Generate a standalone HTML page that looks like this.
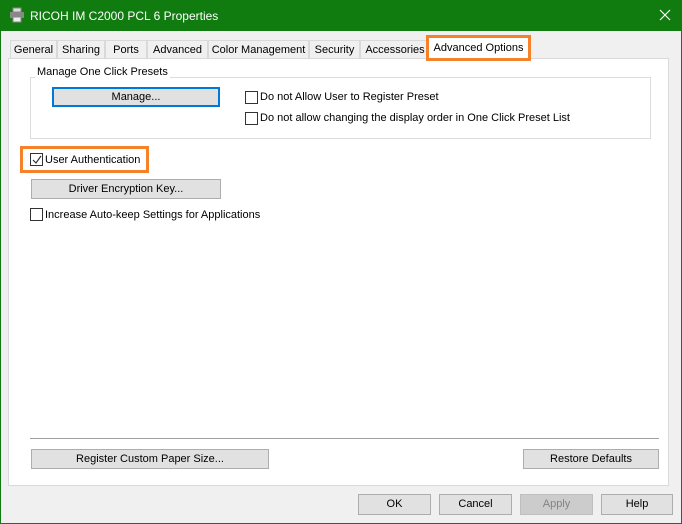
<!DOCTYPE html>
<html><head><meta charset="utf-8"><style>
*{box-sizing:border-box;margin:0;padding:0}
body{width:682px;height:524px;overflow:hidden;background:#f0f0f0;font-family:"Liberation Sans",sans-serif;font-size:11px;color:#000;position:relative;white-space:nowrap}
.a{position:absolute}
.win{left:0;top:0;width:682px;height:524px;border:1px solid #107c10;border-top:none}
.title{left:0;top:0;width:682px;height:31px;background:#107c10;color:#fff;font-size:12px}
.tab{top:40px;height:19px;border:1px solid #d9d9d9;border-bottom:none;background:#f0f0f0;text-align:center;line-height:18px}
.panel{left:8px;top:58px;width:661px;height:428px;background:#fff;border:1px solid #d9d9d9}
.btn{background:#e1e1e1;border:1px solid #adadad;text-align:center;line-height:18px}
.cb{width:13px;height:13px;border:1px solid #333;background:#fff}
.lbl{line-height:14px}
</style></head><body>
<div class="a win"></div>
<div class="a title">
 <svg class="a" style="left:9px;top:7px" width="16" height="16" viewBox="0 0 16 16"><rect x="4" y="1" width="8" height="4" fill="#ddd" stroke="#888"/><rect x="1" y="5" width="14" height="6" fill="#888"/><rect x="4" y="10" width="8" height="5" fill="#eee" stroke="#888"/></svg>
 <span class="a" style="left:30px;top:9px">RICOH IM C2000 PCL 6 Properties</span>
 <svg class="a" style="left:659px;top:9px" width="12" height="12" viewBox="0 0 12 12"><path d="M1 1L11 11M11 1L1 11" stroke="#fff" stroke-width="1.2"/></svg>
</div>
<div class="a tab" style="left:10px;width:47px">General</div>
<div class="a tab" style="left:57px;width:48px">Sharing</div>
<div class="a tab" style="left:105px;width:42px">Ports</div>
<div class="a tab" style="left:147px;width:61px">Advanced</div>
<div class="a tab" style="left:208px;width:101px">Color Management</div>
<div class="a tab" style="left:309px;width:51px">Security</div>
<div class="a tab" style="left:360px;width:70px">Accessories</div>
<div class="a panel"></div>
<div class="a" style="left:426px;top:35px;width:105px;height:26px;border:3px solid #f5822a;background:#fff"></div>
<div class="a" style="left:429px;top:38px;width:99px;height:20px;text-align:center;line-height:20px">Advanced Options</div>

<div class="a" style="left:30px;top:77px;width:621px;height:62px;border:1px solid #dcdcdc"></div>
<div class="a lbl" style="left:35px;top:65px;background:#fff;padding:0 2px">Manage One Click Presets</div>
<div class="a btn" style="left:52px;top:87px;width:168px;height:20px;border:2px solid #0078d7;line-height:16px">Manage...</div>
<div class="a cb" style="left:245px;top:91px"></div><div class="a lbl" style="left:260px;top:90px">Do not Allow User to Register Preset</div>
<div class="a cb" style="left:245px;top:112px"></div><div class="a lbl" style="left:260px;top:111px">Do not allow changing the display order in One Click Preset List</div>

<div class="a" style="left:20px;top:146px;width:129px;height:27px;border:3px solid #f5822a"></div>
<div class="a cb" style="left:30px;top:153px"><svg class="a" style="left:1px;top:1px" width="10" height="10" viewBox="0 0 10 10"><path d="M1 5 L4 8 L9 1" fill="none" stroke="#333" stroke-width="1.2"/></svg></div>
<div class="a lbl" style="left:45px;top:153px">User Authentication</div>
<div class="a btn" style="left:31px;top:179px;width:190px;height:20px">Driver Encryption Key...</div>
<div class="a cb" style="left:30px;top:208px"></div><div class="a lbl" style="left:45px;top:208px">Increase Auto-keep Settings for Applications</div>

<div class="a" style="left:30px;top:438px;width:629px;height:1px;background:#a0a0a0"></div>
<div class="a btn" style="left:31px;top:449px;width:238px;height:20px">Register Custom Paper Size...</div>
<div class="a btn" style="left:523px;top:449px;width:136px;height:20px">Restore Defaults</div>

<div class="a btn" style="left:358px;top:494px;width:73px;height:21px;line-height:19px">OK</div>
<div class="a btn" style="left:439px;top:494px;width:73px;height:21px;line-height:19px">Cancel</div>
<div class="a btn" style="left:520px;top:494px;width:73px;height:21px;line-height:19px;background:#cccccc;border-color:#bfbfbf;color:#838383">Apply</div>
<div class="a btn" style="left:601px;top:494px;width:72px;height:21px;line-height:19px">Help</div>
</body></html>
